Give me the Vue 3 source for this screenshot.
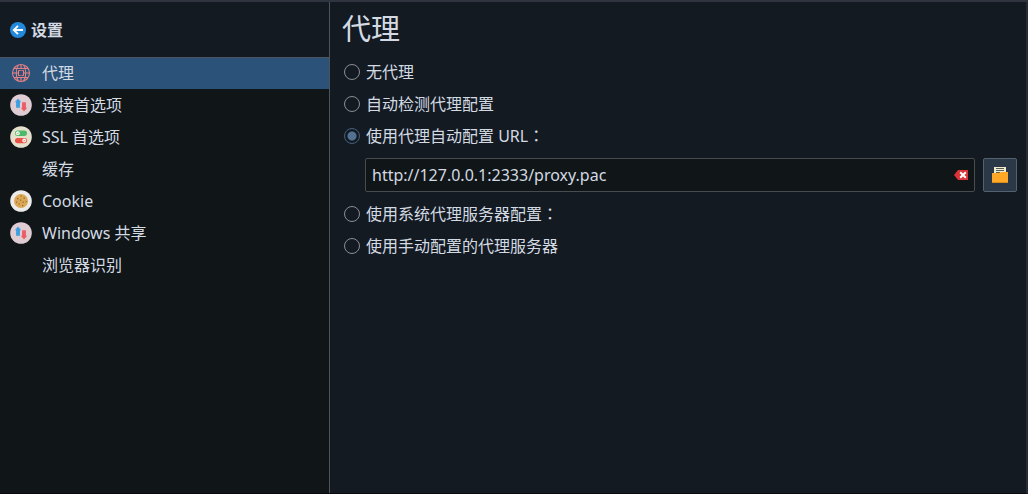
<script setup>
import { ref } from 'vue'

const sections = [
  { label: '代理', icon: 'globe' },
  { label: '连接首选项', icon: 'arrows' },
  { label: 'SSL 首选项', icon: 'switches' },
  { label: '缓存', icon: '' },
  { label: 'Cookie', icon: 'cookie' },
  { label: 'Windows 共享', icon: 'arrows' },
  { label: '浏览器识别', icon: '' },
]
const active = ref(0)
const mode = ref('pac')
const url = ref('http://127.0.0.1:2333/proxy.pac')

const options = [
  { value: 'none', label: '无代理' },
  { value: 'detect', label: '自动检测代理配置' },
  { value: 'pac', label: '使用代理自动配置 URL', colon: true },
  { value: 'system', label: '使用系统代理服务器配置', colon: true },
  { value: 'manual', label: '使用手动配置的代理服务器' },
]
</script>

<template>
  <div class="window">
    <aside class="sidebar">
      <button class="back" type="button">
        <svg width="16" height="16" viewBox="0 0 16 16" aria-hidden="true">
          <circle cx="8" cy="8" r="8" fill="#2389da" />
          <path d="M13 8H4M8 3.8L3.8 8L8 12.2" fill="none" stroke="#fff" stroke-width="1.9" />
        </svg>
        <span>设置</span>
      </button>
      <nav class="sections">
        <button
          v-for="(s, i) in sections"
          :key="s.label"
          type="button"
          class="section"
          :class="{ active: i === active }"
          @click="active = i"
        >
          <svg class="icon" width="22" height="22" viewBox="0 0 22 22" aria-hidden="true">
            <g v-if="s.icon === 'globe'" fill="none" stroke="#e58186" stroke-width="1.1">
              <circle cx="11" cy="11" r="8.5" />
              <path d="M8.5 3C5.5 7 5.5 15 8.5 19M13.5 3C16.5 7 16.5 15 13.5 19" />
              <path d="M4 6.5H18M4 15.5H18M2.5 11H8.5M13.5 11H19.5M11 2.5V6.5M11 15.5V19.5" />
              <path d="M10.5 8.5H8.5V13.5H10.5M11.5 8.5H13.5V13.5H11.5" stroke-width="1" />
            </g>
            <g v-else-if="s.icon === 'arrows'">
              <circle cx="11" cy="11" r="10.8" fill="#e0ccd3" />
              <path d="M8 4.6L11.2 8.2H9.9V13.8H6.1V8.2H4.8Z" fill="#3a9fe3" />
              <path d="M14 17.4L10.8 13.8H12.1V8.2H15.9V13.8H17.2Z" fill="#eb5d63" />
            </g>
            <g v-else-if="s.icon === 'switches'">
              <circle cx="11" cy="11" r="10.8" fill="#e4e0cb" />
              <rect x="5" y="4.5" width="12" height="5.4" rx="2.7" fill="#4fb96b" />
              <rect x="5" y="11.9" width="12" height="5.4" rx="2.7" fill="#eb5146" />
              <circle cx="7.8" cy="7.2" r="2" fill="#f7f7ee" />
              <circle cx="14.2" cy="14.6" r="2" fill="#f7f7ee" />
              <path d="M7 7.2L7.7 7.9L8.7 6.5" fill="none" stroke="#4fb96b" stroke-width=".7" />
              <path d="M13.5 13.9L14.9 15.3M14.9 13.9L13.5 15.3" stroke="#eb5146" stroke-width=".6" />
            </g>
            <g v-else-if="s.icon === 'cookie'">
              <circle cx="11" cy="11" r="10.8" fill="#ecebe9" />
              <circle cx="11" cy="11" r="7" fill="#dba857" />
              <path
                d="M7 8h1.4v1.2H7zM10.5 5.5h1.2v1.2h-1.2zM13.5 7.5h1.4v1.2h-1.4zM10 9.5h1.3v1.3H10zM6 11.5h1.2v1.2H6zM8.5 13.4h1.4v1.2H8.5zM12.5 11.5h1.3v1.3h-1.3zM15.5 11h1v1.2h-1zM12 15h1.3v1.2H12z"
                fill="#94682f"
              />
            </g>
          </svg>
          <span>{{ s.label }}</span>
        </button>
      </nav>
    </aside>

    <main class="page">
      <h1>代理</h1>
      <form class="options" @submit.prevent>
        <template v-for="o in options" :key="o.value">
          <label class="option">
            <input v-model="mode" type="radio" name="proxy" :value="o.value" />
            <span>{{ o.label }}<span v-if="o.colon" class="colon">：</span></span>
          </label>
          <div v-if="o.value === 'pac'" class="script">
            <div class="field">
              <input v-model="url" type="text" aria-label="URL" spellcheck="false" />
              <button class="clear" type="button" aria-label="清除" @click="url = ''">
                <svg width="14" height="10" viewBox="0 0 14 10" aria-hidden="true">
                  <path d="M0 5L4 0H14V10H4Z" fill="#dc3338" />
                  <path d="M6.2 2.2L11.8 7.8M11.8 2.2L6.2 7.8" stroke="#fff" stroke-width="2" />
                </svg>
              </button>
            </div>
            <button class="browse" type="button" aria-label="打开文件">
              <svg width="16" height="16" viewBox="0 0 16 16" aria-hidden="true">
                <path d="M2 0H14V8H2Z" fill="#eeebd0" />
                <path d="M4 1.5H12M4 3.5H12M4 5.5H8" stroke="#555d55" />
                <path d="M0 6H7L9 5H16V16H0Z" fill="#ffa726" />
                <path d="M0 15.5H16" stroke="#d98c1c" />
              </svg>
            </button>
          </div>
        </template>
      </form>
    </main>
  </div>
</template>

<style>
body {
  background: #141a21;
}
</style>

<style scoped>
.window {
  display: flex;
  box-sizing: border-box;
  min-height: 100vh;
  border-top: 2px solid #2f343f;
  border-right: 2px solid #262b36;
  border-bottom: 1px solid #0b0713;
  background: #141a21;
  color: #d3dae3;
  font-family: "Noto Sans", "Noto Sans CJK SC", sans-serif;
  font-size: 16px;
  line-height: 24px;
}

button,
input {
  margin: 0;
  padding: 0;
  color: inherit;
  font: inherit;
}

button {
  display: flex;
  align-items: center;
  border: 0;
  background: none;
}

.sidebar {
  display: flex;
  flex: 0 0 329px;
  flex-direction: column;
  border-right: 1px solid #505359;
}

.back {
  gap: 5px;
  height: 55px;
  padding-left: 10px;
  font-weight: 700;
}

.sections {
  flex: 1;
  background: #101518;
}

.section {
  gap: 10px;
  width: 100%;
  height: 32px;
  padding-left: 10px;
}

.section.active {
  background: #2b5279;
  box-shadow: inset 0 1px #4b545f;
}

.page {
  flex: 1;
  min-width: 0;
  padding: 6px 9px 0 12px;
}

h1 {
  margin: 0;
  font-size: 29px;
  font-weight: 400;
  line-height: 42px;
}

.options {
  display: flex;
  flex-direction: column;
  padding-top: 6px;
}

.option {
  display: flex;
  align-items: center;
  gap: 6px;
  height: 32px;
  padding-left: 2px;
}

.option input {
  box-sizing: border-box;
  width: 16px;
  height: 16px;
  border: 1px solid #8b8e93;
  border-radius: 50%;
  appearance: none;
}

.option input:checked {
  border-color: #44607f;
  background: radial-gradient(circle, #537191 0 4px, transparent 5px);
}

.colon {
  font-family: "Noto Sans CJK TC", sans-serif;
  line-height: 16px;
}

.script {
  display: flex;
  gap: 8px;
  padding: 6px 0 6px 23px;
}

.field {
  display: flex;
  flex: 1;
  align-items: center;
  box-sizing: border-box;
  height: 34px;
  padding: 0 6px;
  border: 1px solid #484b50;
  border-radius: 2px;
  background: #101518;
}

.field input {
  flex: 1;
  min-width: 0;
  border: 0;
  outline: 0;
  background: none;
}

.browse {
  justify-content: center;
  box-sizing: border-box;
  width: 34px;
  height: 34px;
  border: 1px solid #566170;
  border-radius: 2px;
  background: #2b3848;
}
</style>
